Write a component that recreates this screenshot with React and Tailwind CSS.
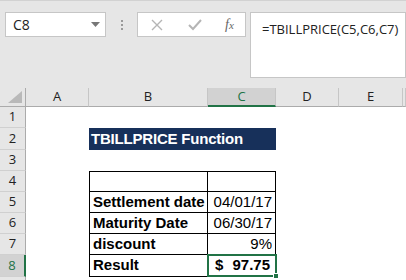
const rows = [
  { n: 1 },
  { n: 2, title: true },
  { n: 3 },
  { n: 4, table: true, label: "", value: "" },
  { n: 5, table: true, label: "Settlement date", value: "04/01/17" },
  { n: 6, table: true, label: "Maturity Date", value: "06/30/17" },
  { n: 7, table: true, label: "discount", value: "9%" },
  { n: 8, table: true, label: "Result", result: true },
];

export default function App() {
  return (
    <div className="w-[406px] h-[280px] overflow-hidden bg-white font-['Liberation_Sans',sans-serif]">
      {/* FORMULA BAR */}
      <div className="h-[88px] bg-[#e6e6e6] border-t border-[#d2d2d2] flex items-start pt-[11px] pl-[5px]">
        <div className="w-[101px] h-[25px] bg-white border border-[#c6c6c6] flex items-center justify-between pl-[7px] pr-[5px] text-[14px] text-[#222] font-['Open_Sans',sans-serif]">
          <span>C8</span>
          <svg width="9" height="5" viewBox="0 0 9 5">
            <path d="M0 0h9L4.5 5z" fill="#777" />
          </svg>
        </div>
        <div className="w-[31px] h-[25px] flex flex-col items-center justify-center gap-[2px]">
          <div className="w-[2px] h-[2px] bg-[#9a9a9a]" />
          <div className="w-[2px] h-[2px] bg-[#9a9a9a]" />
          <div className="w-[2px] h-[2px] bg-[#9a9a9a]" />
        </div>
        <div className="w-[109px] h-[25px] bg-white border border-[#c6c6c6] flex items-center">
          <svg className="ml-[13px]" width="12" height="12" viewBox="0 0 12 12">
            <path d="M1 1l10 10M11 1L1 11" stroke="#b5b5b5" strokeWidth="1.4" />
          </svg>
          <svg className="ml-[25px]" width="14" height="12" viewBox="0 0 14 12">
            <path d="M1 6l4 4 8-9" stroke="#b5b5b5" strokeWidth="2" fill="none" />
          </svg>
          <span className="ml-[23px] text-[14px] italic text-[#666] font-['Liberation_Serif',serif]">
            f<span className="text-[11px]">x</span>
          </span>
        </div>
        <div className="ml-[4px] flex-1 h-[66px] bg-white border border-[#c6c6c6] pl-[11px] pt-[7px] text-[13px] text-[#222] font-['Open_Sans',sans-serif]">
          =TBILLPRICE(C5,C6,C7)
        </div>
      </div>

      {/* GRID */}
      <div className="grid grid-cols-[26px_63px_119px_68px_63px_64px_1fr] grid-rows-[19px_21px_22px_21px_21px_21px_21px_21px_22px_10px]">
        {/* header row */}
        <div className="bg-[#e6e6e6] border-r border-b border-[#ababab] relative">
          <svg className="absolute right-[3px] bottom-[3px]" width="14" height="12" viewBox="0 0 14 12">
            <path d="M14 0v12H0z" fill="#b9b9b9" />
          </svg>
        </div>
        {["A", "B", "C", "D", "E", ""].map((c) => (
          <div
            key={c || "x"}
            className={`flex items-center justify-center text-[13px] border-r border-[#c6c6c6] font-['Open_Sans',sans-serif] ${
              c === "C"
                ? "bg-[#d2d2d2] border-b-2 border-b-[#217346] text-[#217346]"
                : "bg-[#e6e6e6] border-b border-b-[#ababab] text-[#222]"
            }`}
          >
            {c}
          </div>
        ))}

        {rows.map((r) => (
          <Row key={r.n} r={r} />
        ))}

        {/* row 9 */}
        <div className="bg-[#e6e6e6] border-r border-[#ababab]" />
        <div className="col-span-6" />
      </div>
    </div>
  );
}

function Row({ r }) {
  const sel = r.n === 8;
  return (
    <>
      <div
        className={`flex items-center justify-center text-[13px] font-['Open_Sans',sans-serif] border-b border-[#d0d0d0] ${
          sel
            ? "bg-[#d2d2d2] border-r-2 border-r-[#217346] text-[#217346]"
            : "bg-[#e6e6e6] border-r border-r-[#ababab] text-[#222]"
        }`}
      >
        {r.n}
      </div>
      <div />
      {r.title && (
        <div className="col-span-2 bg-[#17305a] text-white font-bold text-[15px] flex items-center pl-[2px] tracking-[-0.2px]">
          TBILLPRICE Function
        </div>
      )}
      {r.table && (
        <>
          <div
            className={`border-l border-r border-b border-black flex items-center pl-[3px] text-[15px] font-bold text-black ${
              r.n === 4 ? "border-t" : ""
            }`}
          >
            {r.label}
          </div>
          {r.result ? (
            <div className="border-2 border-[#217346] relative flex items-center justify-between pl-[6px] pr-[5px] text-[15px] font-bold text-black -ml-[1px] mr-[-1px] mt-[-1px]">
              <span>$</span>
              <span>97.75</span>
              <div className="absolute right-[-4px] bottom-[-4px] w-[6px] h-[6px] bg-[#217346] border border-white" />
            </div>
          ) : (
            <div
              className={`border-r border-b border-black flex items-center justify-end pr-[3px] text-[15px] text-black ${
                r.n === 4 ? "border-t" : ""
              }`}
            >
              {r.value}
            </div>
          )}
        </>
      )}
      {!r.title && !r.table && <div className="col-span-2" />}
      <div className="col-span-3" />
    </>
  );
}
